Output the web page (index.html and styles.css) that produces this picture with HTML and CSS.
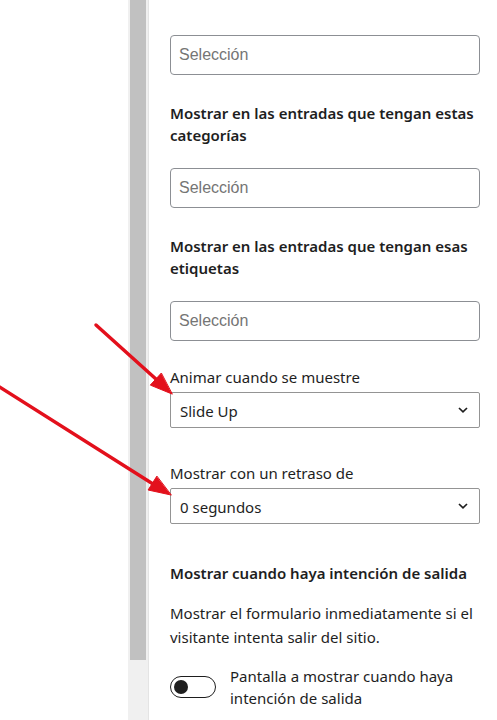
FILE: index.html
```html
<!DOCTYPE html>
<html lang="es">
<head>
    <meta charset="UTF-8">
    <meta name="viewport" content="width=device-width, initial-scale=1.0">
    <title>Ajustes del formulario</title>
    <link rel="stylesheet" href="styles.css">
</head>
<body>
    <div class="page">
        <div class="gutter"></div>

        <div class="scrollbar">
            <div class="thumb"></div>
        </div>

        <div class="panel">
            <input type="text" class="token-input" placeholder="Selección">

            <h3 class="field-title">Mostrar en las entradas que tengan estas categorías</h3>
            <input type="text" class="token-input" placeholder="Selección">

            <h3 class="field-title">Mostrar en las entradas que tengan esas etiquetas</h3>
            <input type="text" class="token-input" placeholder="Selección">

            <label class="field-label first">Animar cuando se muestre</label>
            <div class="select-wrap">
                <select class="select">
                    <option>Slide Up</option>
                </select>
                <svg class="chevron" width="10" height="6" viewBox="0 0 10 6">
                    <path d="M1 1 L5 4.8 L9 1" fill="none" stroke="#1e1e1e" stroke-width="1.7"/>
                </svg>
            </div>

            <label class="field-label">Mostrar con un retraso de</label>
            <div class="select-wrap">
                <select class="select">
                    <option>0 segundos</option>
                </select>
                <svg class="chevron" width="10" height="6" viewBox="0 0 10 6">
                    <path d="M1 1 L5 4.8 L9 1" fill="none" stroke="#1e1e1e" stroke-width="1.7"/>
                </svg>
            </div>

            <h3 class="section-title">Mostrar cuando haya intención de salida</h3>
            <p class="help">Mostrar el formulario inmediatamente si el visitante intenta salir del sitio.</p>

            <div class="toggle-row">
                <span class="toggle"><span class="knob"></span></span>
                <span class="toggle-label">Pantalla a mostrar cuando haya intención de salida</span>
            </div>
        </div>
    </div>

    <!-- red annotation arrows drawn over the screenshot -->
    <svg class="arrows" width="497" height="720" viewBox="0 0 497 720">
        <g fill="#e3101c" stroke="#e3101c" stroke-width="3.5" stroke-linecap="round">
            <line x1="96" y1="325" x2="157" y2="380"/>
            <polygon points="172,394 150.3,385.1 161.1,373.3" stroke-width="1"/>
            <line x1="-2" y1="386" x2="153" y2="484"/>
            <polygon points="171,495 148.1,490 156.7,476.4" stroke-width="1"/>
        </g>
    </svg>
</body>
</html>
```

FILE: styles.css
```css
* {
    margin: 0;
    padding: 0;
    box-sizing: border-box;
}

body {
    font-family: 'Noto Sans', 'Open Sans', sans-serif;
    font-size: 15px;
    color: #1e1e1e;
    background: #ffffff;
    height: 720px;
    overflow: hidden;
    position: relative;
}

.page {
    display: flex;
    height: 720px;
}

.gutter {
    width: 128px;
    flex-shrink: 0;
}

/* fake browser scrollbar */
.scrollbar {
    width: 21px;
    flex-shrink: 0;
    background: #f0f0f0;
    padding: 0 2px 0 2px;
    border-right: 1px solid #e4e4e4;
}

.thumb {
    height: 660px;
    background: #c1c1c1;
}

/* settings panel */
.panel {
    flex: 1;
    padding: 35px 17px 0 21px;
}

.token-input {
    display: block;
    width: 100%;
    height: 40px;
    padding: 0 8px;
    border: 1px solid #8c8f94;
    border-radius: 4px;
    font-family: 'Liberation Sans', Arial, sans-serif;
    font-size: 16px;
    color: #1e1e1e;
    background: #fff;
}

.token-input::placeholder {
    color: #757575;
}

.field-title {
    font-size: 15px;
    font-weight: 600;
    line-height: 22px;
    margin: 27px 0 22px;
}

.field-label {
    display: block;
    line-height: 22px;
    margin: 34px 0 4px;
}

.field-label.first {
    margin-top: 25px;
}

.select-wrap {
    position: relative;
}

.select {
    display: block;
    width: 100%;
    height: 36px;
    padding: 2px 30px 0 9px;
    border: 1px solid #949494;
    border-radius: 2px;
    background: #fff;
    font-family: 'Noto Sans', 'Open Sans', sans-serif;
    font-size: 15px;
    color: #1e1e1e;
    appearance: none;
    -webkit-appearance: none;
}

.chevron {
    position: absolute;
    right: 12px;
    top: 15px;
    pointer-events: none;
}

.section-title {
    font-size: 15px;
    font-weight: 600;
    line-height: 22px;
    margin-top: 38px;
}

.help {
    line-height: 24px;
    margin-top: 17px;
}

.toggle-row {
    display: flex;
    align-items: center;
    gap: 14px;
    margin-top: 16px;
}

.toggle {
    width: 46px;
    height: 22px;
    flex-shrink: 0;
    border: 1.5px solid #1e1e1e;
    border-radius: 11px;
    display: flex;
    align-items: center;
    padding-left: 3px;
}

.knob {
    width: 14px;
    height: 14px;
    border-radius: 50%;
    background: #1e1e1e;
}

.toggle-label {
    line-height: 22px;
}

.arrows {
    position: absolute;
    top: 0;
    left: 0;
    pointer-events: none;
}
```
